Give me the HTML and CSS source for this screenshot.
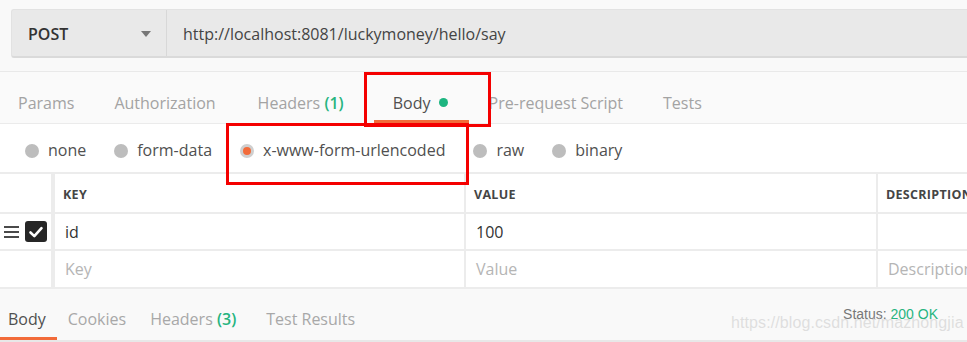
FILE: index.html
```html
<!DOCTYPE html>
<html lang="en">
<head>
    <meta charset="UTF-8">
    <meta name="viewport" content="width=device-width, initial-scale=1.0">
    <title>POST luckymoney/hello/say</title>
    <link rel="stylesheet" href="styles.css">
</head>
<body>
    <div class="request-top">
        <div class="request-bar">
            <div class="method">
                <span>POST</span>
                <span class="caret"></span>
            </div>
            <div class="url">http://localhost:8081/luckymoney/hello/say</div>
        </div>
    </div>

    <div class="tabs">
        <div class="tab">Params</div>
        <div class="tab">Authorization</div>
        <div class="tab">Headers <span class="count">(1)</span></div>
        <div class="tab active">Body <span class="dot"></span></div>
        <div class="tab">Pre-request Script</div>
        <div class="tab">Tests</div>
    </div>

    <div class="body-modes">
        <label class="mode"><span class="radio"></span>none</label>
        <label class="mode"><span class="radio"></span>form-data</label>
        <label class="mode"><span class="radio checked"></span>x-www-form-urlencoded</label>
        <label class="mode"><span class="radio"></span>raw</label>
        <label class="mode"><span class="radio"></span>binary</label>
    </div>

    <div class="kv">
        <div class="cell handle"></div>
        <div class="cell head">KEY</div>
        <div class="cell head">VALUE</div>
        <div class="cell head">DESCRIPTION</div>

        <div class="cell handle">
            <svg class="drag" width="17" height="14" viewBox="0 0 17 14">
                <path d="M1 2h15M1 7h15M1 12h15" stroke="#4a4a4a" stroke-width="2.2"/>
            </svg>
            <span class="check">
                <svg width="16" height="14" viewBox="0 0 16 14">
                    <path d="M2.5 7.5l3.8 3.6 7.2-8" fill="none" stroke="#fff" stroke-width="2.6" stroke-linecap="round" stroke-linejoin="round"/>
                </svg>
            </span>
        </div>
        <div class="cell">id</div>
        <div class="cell">100</div>
        <div class="cell"></div>

        <div class="cell handle"></div>
        <div class="cell empty">Key</div>
        <div class="cell empty">Value</div>
        <div class="cell empty">Description</div>
    </div>

    <div class="response">
        <div class="res-tabs">
            <div class="res-tab active">Body</div>
            <div class="res-tab">Cookies</div>
            <div class="res-tab">Headers <span class="count">(3)</span></div>
            <div class="res-tab">Test Results</div>
        </div>
        <div class="status">Status: <span class="ok">200 OK</span></div>
    </div>

    <!-- annotations drawn over the screenshot -->
    <div class="mark mark-body"></div>
    <div class="mark mark-mode"></div>
    <div class="watermark">https://blog.csdn.net/mazhongjia</div>
</body>
</html>
```

FILE: styles.css
```css
body {
    margin: 0;
    font-family: "Open Sans", sans-serif;
    background-color: #f9f9f9;
    color: #333;
    overflow: hidden;
}

/* Request bar */
.request-top {
    height: 72px;
    border-bottom: 1px solid #e9e9e9;
    box-sizing: border-box;
    padding: 9px 0 0 11px;
}

.request-bar {
    display: flex;
    height: 49px;
    background: #e9e9e9;
    border: 1px solid #e2e2e2;
    border-bottom: 2px solid #dadada;
    border-right: none;
    border-radius: 3px 0 0 3px;
    box-sizing: border-box;
}

.method {
    width: 155px;
    display: flex;
    align-items: center;
    justify-content: space-between;
    padding: 1px 15px 0 16px;
    box-sizing: border-box;
    font-size: 16px;
    font-weight: 600;
    color: #333;
    border-right: 1px solid #d8d8d8;
}

.caret {
    width: 0;
    height: 0;
    border-left: 5px solid transparent;
    border-right: 5px solid transparent;
    border-top: 6px solid #777;
}

.url {
    flex: 1;
    display: flex;
    align-items: center;
    padding: 1px 0 0 16px;
    font-size: 16px;
    color: #444;
}

/* Request tabs */
.tabs {
    display: flex;
    height: 52px;
    background: #fafafa;
    border-bottom: 1px solid #ebebeb;
    box-sizing: border-box;
    margin-left: -2px;
}

.tab {
    position: relative;
    display: flex;
    align-items: center;
    padding: 10px 20px 0;
    font-size: 16px;
    color: #a3a3a3;
    white-space: pre;
}

.tab:nth-child(3) {
    margin-left: 2px;
}

.tab.active {
    color: #505050;
    margin-left: 10px;
    padding-left: 19px;
    padding-right: 21px;
}

.tab.active::after {
    content: "";
    position: absolute;
    left: 0;
    right: 0;
    bottom: -1px;
    height: 4px;
    background: #f26b3a;
}

.count {
    color: #26b47f;
    font-weight: 600;
}

.dot {
    display: inline-block;
    width: 9px;
    height: 9px;
    margin-left: 4px;
    border-radius: 50%;
    background: #1db580;
}

/* Body modes */
.body-modes {
    display: flex;
    align-items: center;
    gap: 28px;
    height: 50px;
    padding: 3px 0 0 25px;
    background: #fff;
    border-bottom: 2px solid #ececec;
    box-sizing: border-box;
}

.mode {
    display: flex;
    align-items: center;
    gap: 9px;
    font-size: 16px;
    color: #505050;
}

.radio {
    width: 14px;
    height: 14px;
    margin-top: 2px;
    border-radius: 50%;
    background: #bdbdbd;
    box-sizing: border-box;
}

.radio.checked {
    background: #f26b3a;
    border: 3px solid #cfcfcf;
}

/* Key/value table */
.kv {
    display: grid;
    grid-template-columns: 53px 409px 410px 1fr;
    grid-template-rows: 38px 35px 36px;
    gap: 2px;
    background: #ececec;
    padding-bottom: 2px;
}

.cell {
    display: flex;
    align-items: center;
    padding-left: 10px;
    background: #fff;
    font-size: 16px;
    color: #333;
    white-space: nowrap;
    overflow: hidden;
}

.cell.handle {
    padding-left: 3px;
    gap: 5px;
    margin-right: 2px;
}

.cell.head {
    padding-left: 8px;
    padding-top: 2px;
    font-size: 12.5px;
    font-weight: 700;
    color: #454545;
    letter-spacing: 0.3px;
}

.cell.empty {
    color: #b5b5b5;
}

.check {
    display: flex;
    align-items: center;
    justify-content: center;
    width: 22px;
    height: 21px;
    border-radius: 3px;
    background: #262626;
}

/* Response */
.response {
    display: flex;
    justify-content: space-between;
    align-items: center;
    height: 53px;
    border-bottom: 2px solid #e8e8e8;
    box-sizing: border-box;
    padding-top: 8px;
}

.res-tabs {
    display: flex;
    height: 100%;
}

.res-tab {
    position: relative;
    display: flex;
    align-items: center;
    padding: 0 12px;
    font-size: 16px;
    color: #a8a8a8;
    white-space: pre;
}

.res-tab:first-child {
    padding-left: 8px;
    padding-right: 11px;
}

.res-tab:nth-child(2) {
    padding-left: 11px;
}

.res-tab:nth-child(3) {
    padding-right: 18px;
}

.res-tab.active {
    color: #505050;
}

.res-tab.active::after {
    content: "";
    position: absolute;
    left: 0;
    right: 0;
    bottom: 0;
    height: 3px;
    background: #f26b3a;
}

.status {
    font-family: "Liberation Sans", Arial, sans-serif;
    font-size: 14px;
    color: #777;
    margin-right: 29px;
    margin-top: -9px;
}

.status .ok {
    color: #26b47f;
}

/* Screenshot annotations */
.mark {
    position: absolute;
    border: 3px solid #f40000;
    box-sizing: border-box;
}

.mark-body {
    left: 364px;
    top: 72px;
    width: 127px;
    height: 55px;
}

.mark-mode {
    left: 226px;
    top: 123px;
    width: 243px;
    height: 62px;
}

.watermark {
    position: absolute;
    left: 731px;
    top: 314px;
    font-family: "Liberation Sans", Arial, sans-serif;
    font-size: 16px;
    letter-spacing: 0.1px;
    color: rgba(200, 200, 200, 0.55);
}
```
